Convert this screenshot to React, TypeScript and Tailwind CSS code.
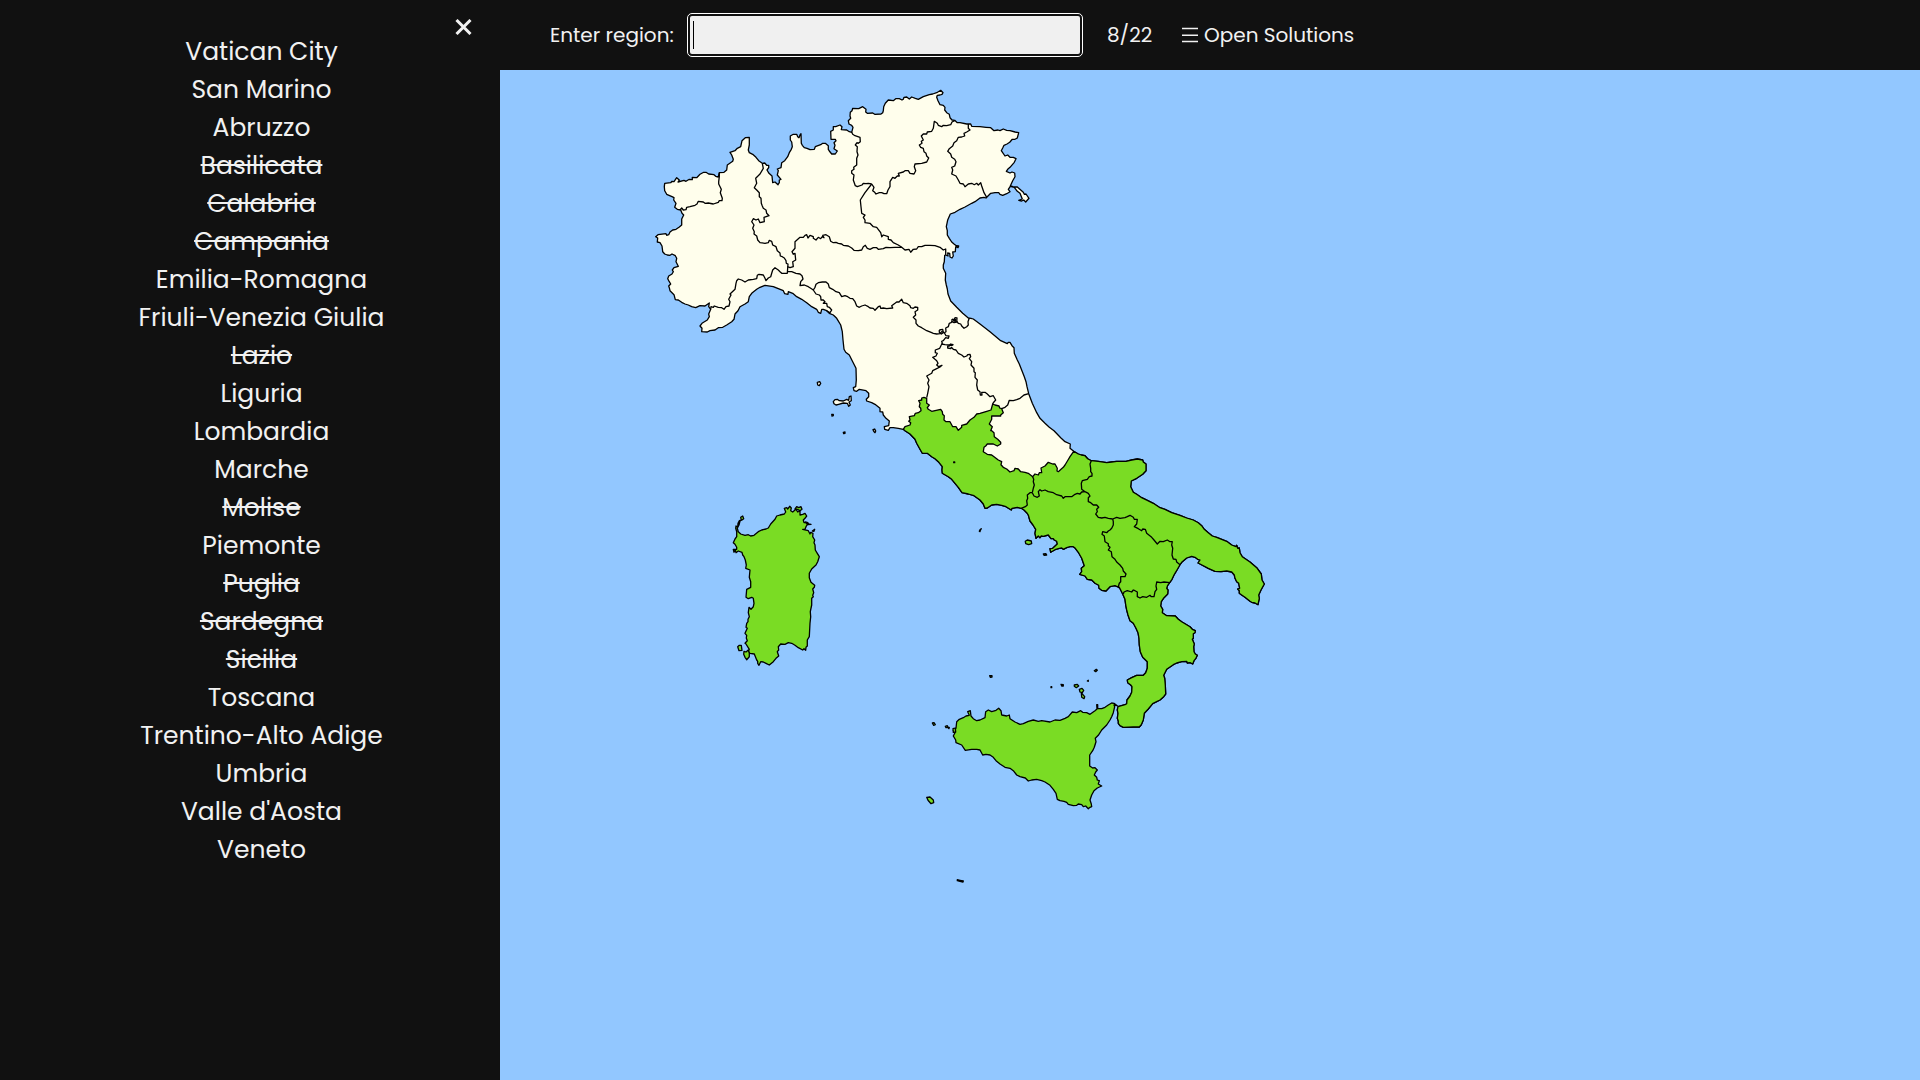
type Pt = [number, number];

const seg = (ox: number, oy: number, s: string): Pt[] =>
  s.trim().split(/\s+/).map((p) => {
    const [x, y] = p.split(",").map(Number);
    return [ox - 500 + x / 3, oy - 70 + y / 3];
  });
const str = (p: Pt[]) => p.map(([x, y]) => `${x.toFixed(1)},${y.toFixed(1)}`).join(" ");

// Local survey sheets; each has its own origin and a 3:1 scale.
const A = (s: string) => seg(650, 120, s);
const B = (s: string) => seg(780, 80, s);
const C = (s: string) => seg(780, 220, s);
const D = (s: string) => seg(900, 310, s);
const E = (s: string) => seg(1000, 440, s);
const F = (s: string) => seg(720, 490, s);
const G = (s: string) => seg(1040, 570, s);
const H = (s: string) => seg(910, 660, s);

const northWestCoast: Pt[] = [
  ...C("370,628 355,625 340,623 330,623 325,631 314,628 313,620 326,617 328,603 318,595 310,585 308,576 300,575 300,565 285,553 275,548 260,543 259,538 266,530 266,520 258,512 238,508 230,514 222,512 220,503 227,500 229,480 228,445 218,425 208,405 197,397 192,388 189,360 187,335 182,315 170,295 160,285 148,280"),
  ...A("530,572 520,568 515,568 512,580 505,577 500,568 485,560 470,548 455,538 440,530 428,520 415,515 414,523 404,521 400,512 385,506 370,500 345,496 330,502 320,508 305,520 298,530 295,545 285,552 270,560 264,572 255,582 252,598 245,605 230,615 218,622 205,623 195,630 180,632 172,636 155,635 156,625 150,618 156,610 172,600 178,590 176,582 182,568"),
  ...A("176,560 178,549 165,558 150,557 137,563 125,560 115,555 105,552 95,547 85,540 76,539 72,524 60,512 58,503 56,498 62,492 58,485 53,476 56,468 66,462 70,455 67,450 72,443 85,439 78,425 80,415 76,407 66,402 60,406 52,405 44,402 38,395 36,378 30,368 22,366 23,354 17,350 24,344 48,341 50,346 56,344 60,336 68,330 78,328 87,322 95,315 95,297 101,285 96,280 92,270 82,268 74,262 78,250 71,240 72,233 66,230 50,223 44,212 43,200 44,190 62,188 66,184 72,185 80,173 88,180 84,186 102,181 108,184 118,178 127,179 127,172 140,173 150,163 161,157 168,157 176,162 192,164 197,169 205,171 208,158 222,157 230,150 232,135 248,124 250,118 245,105 240,97 255,92 262,85 272,80 276,62 286,53 298,52 298,75 295,90 298,98 308,103 318,112 326,122 337,130 344,129 350,136 356,136 356,143 351,150 357,160 366,168 368,188 375,186 384,194 388,188 388,180 393,178 382,165 385,152 382,147 393,143 395,128 404,122 413,110 418,98 424,88 427,80 425,66 421,60 421,48 430,43 440,43 443,50 447,53 450,45 453,41 454,70"),
  ...B("67,196 73,203 81,205 90,209 103,208 106,200 122,194 128,190 136,190 145,197 145,208 148,213 155,222 166,222 172,213 162,206 165,196 162,188 168,182 166,178 153,178 152,154 160,150 160,140 167,140 180,135 186,140 184,149 200,150 208,155 215,157 219,142 215,136 207,132 205,122 212,115 210,108 211,97 216,92 218,85 236,86 248,80 258,88 257,96 262,100 278,99 284,103 303,102 308,98 310,92 311,80 316,70 325,60 340,62 347,56 358,56 366,60 370,58 372,52 380,51 388,57 395,51 406,55 415,58 430,50 448,44 458,42 470,38 482,31 489,38 486,43 480,45 472,46 470,52 474,62 480,74 490,76 495,82 494,90 500,98 508,103 510,113 516,120 524,121"),
];
const northEastCoast: Pt[] = [
  ...B("532,128 540,128 560,132 572,132 575,139 600,140 618,142 632,143 642,152 654,150 660,152 670,147 680,151 690,152 705,156 716,158 712,174 705,178 697,178 689,187 681,192 672,196 668,204 664,212 675,228 683,225 690,232 700,232 708,236 703,247 690,262 683,268 679,274 690,279 696,276 704,279 705,290 698,302 691,318 699,320 712,321 730,337 733,343 738,342 747,355 737,366 731,360 725,363 716,361 727,357 720,340 712,334 703,322 691,319 685,328 690,335 680,341 668,346 660,343 656,338 645,338 632,340 618,354 612,352 600,354 585,365 575,370 555,381 540,388 525,397 511,402 503,420 501,430 499,440 502,452 502,465 508,475 515,486 522,492 529,497 536,498 534,503 527,500 526,515 518,516 520,528 516,534 510,531 509,520 503,519 504,528 497,525"),
  ...C("494,106 493,125 490,135 490,145 497,160 496,180 499,195 502,207 504,222 512,243 530,262 548,280 565,294 573,295 580,297 600,312 630,335 662,362 682,371 685,367 690,367 696,377 702,383 703,400 712,420 718,432 733,470 738,485 741,500 746,521 757,550 770,578 780,595"),
  ...D("435,340 448,352 462,362 482,383 495,395 511,402 510,415 521,424"),
];
const southCoast: Pt[] = [
  ...E("221,34 235,42 244,45 255,47 263,56 274,62 295,64 320,68 335,66 350,64 378,64 395,60 412,57 428,60 430,66 438,72 438,92 428,103 410,115 394,123 392,140 400,157 410,163 425,173 442,181 460,190 480,203 495,208 515,218 540,226 560,234 580,240 595,248 605,257 612,267 625,278 637,288 650,292 680,304 695,315 708,320 710,316 713,325 718,324 720,338 727,350 750,366 770,383 784,402 786,420 793,432 783,450 776,465 778,475 774,494 765,489 755,487 750,484 735,472 724,464 718,460 718,452 713,447 719,445 716,430 710,425 705,415 703,405 695,396 680,393 663,395 645,394 625,385 600,372 594,369 600,360 593,358 585,352 575,349 560,354 545,367 540,374 528,395 522,405 516,418 509,428 503,436 500,445 504,450"),
  ...G("383,72 372,83 364,95 362,108 368,118 367,128 380,137 406,138 415,148 425,155 435,161 450,170 457,178 466,182 465,188 460,191 460,205 457,208 463,222 461,230 462,245 466,252 472,256 467,266 462,272 458,282 450,278 442,279 440,274 425,275 410,279 400,284 380,298 371,316 374,325 376,345 377,372 371,380 360,390 350,395 338,401 325,417 313,430 310,450 304,464 298,471 280,471 250,472 240,467 235,460 235,453 232,445 234,430 232,420 234,410 255,404 260,401 261,390 270,378 275,367 276,350 272,345 263,338 262,330 275,323 290,316 310,316 317,308 322,295 322,275 308,262 301,245 298,225 297,205 294,188 288,175 280,160 270,152 264,135 260,120 257,105 255,88 248,72 238,52"),
  ...E("350,439 345,437 330,440 318,453 305,451 297,445 296,436 285,430 275,420 262,418 255,408 239,403 245,395 244,385 253,377 245,355 235,337 226,325 220,320 210,320 200,323 190,328 185,324 178,325 165,329 152,337 150,326 158,325 172,312 170,304 163,300 160,296 153,296 145,285 130,289 124,288 120,293 115,288 108,295 105,280 107,268 99,255 90,243 85,225 80,218 72,210 64,205"),
  ...D("352,592 336,595 334,600 318,590 305,586 290,583 275,585 262,594 255,595 250,582 240,570 222,557 205,552 186,548 175,532 165,520 155,508 145,500 127,490 126,480 127,470 115,455 105,446 95,440 82,430 67,430 60,418 50,400 45,388 30,372 15,362 10,358"),
];
const lazioBorder: Pt[] = [
  ...C("370,628 375,620 390,615 392,608 386,604 390,600 388,590 403,587 406,580 415,578 423,572 422,565 418,560 420,550 416,542 425,540 425,534 432,532 440,535 440,550 448,555 442,563 445,568 455,574 482,568 487,575 488,583 493,587 492,600 498,605 510,605 518,620 528,620 535,631 545,622 545,616 560,612 570,600 582,592 590,582 600,580 620,574 633,570 638,552 645,555 657,558 659,564 665,566 670,578 662,585 662,588 635,588 635,598 628,612 637,620 632,632"),
  ...D("275,362 282,368 283,380 293,388 302,397 302,402 292,408 280,402 262,402 257,408 252,412 250,425 262,433 275,435 284,442 295,450 305,455 303,464 310,472 320,477 330,486 342,482 345,475 355,477 362,485 375,487 385,490 398,500"),
];
const moliseNorth = D("398,500 405,492 415,495 418,488 425,488 423,474 435,468 445,457 458,462 465,462 472,475 471,483 475,485 483,478 490,472 495,465 504,450 510,440 521,424");

const mainland = [...northWestCoast, ...northEastCoast, ...southCoast];
const south = [...lazioBorder, ...moliseNorth, ...southCoast];

const borders: Pt[][] = [
  A("208,158 208,170 206,185 206,192 214,208 211,218 217,235 216,242 208,242 205,247 190,252 175,249 165,250 160,246 145,244 141,252 135,256 120,260 110,262 108,269 100,270 95,264 90,270"),
  A("337,130 340,145 330,162 317,175 320,190 313,203 320,210 328,218 328,230 333,235 334,250 337,258 340,265 348,270 350,280 357,287 342,292 343,305 330,308 325,297 318,300 310,296 305,305 312,315 308,325 313,335 312,342 320,348 323,360 330,368 345,370 355,368 358,361 365,364 368,375 378,380 382,392 390,399 391,408 397,410 403,414 408,422 409,430 414,432 412,460"),
  A("182,568 183,560 190,562 193,558 205,562 215,563 222,568 228,560 237,558 240,545 236,538 243,525 240,522 255,508 258,490 260,482 265,477 275,480 285,486 295,480 310,478 320,476 322,466 327,463 340,465 345,475 348,482 355,474 362,470 365,460 368,450 375,443 385,450 390,455 395,460 413,460"),
  A("413,455 425,455 438,460 450,462 456,467 459,477 452,485 450,497 463,495 475,500 482,505 490,510"),
  A("490,510 498,522 508,525 512,530 513,540 520,540 525,545 520,550 530,550 532,560 538,562 545,570 540,578 530,572"),
  C("22,140 30,143 40,140 38,125 47,120 45,100 40,103 36,95 45,85 45,65 60,52 70,52 75,46 80,44 84,54 90,46 100,50 100,55 108,60 115,52 122,56 127,50 132,53 128,46 138,44 148,50 152,64 160,68 168,67 175,70 185,72 190,76 205,78 215,84 222,91 235,92 245,90 250,80 256,76 262,85 270,88 280,83 290,83 295,88 310,86 318,82 330,83 345,82 365,82 375,90 387,88 392,97 400,88 410,87 415,80 425,80 435,76 450,76 465,77 480,82 490,90 497,87 497,105"),
  B("365,502 355,495 340,488 333,480 325,478 325,470 310,465 305,470 302,458 290,442 280,440 270,430 255,428 255,420 250,412 255,405 245,400 243,380 241,360 255,338 275,312"),
  B("215,157 218,163 225,167 240,172 241,185 235,190 231,188 226,195 232,200 231,215 234,225 230,235 230,255 221,262 222,268 215,272 215,280 222,285 220,300 226,317 232,320 246,315 250,310 258,311 265,310 275,312"),
  B("275,312 282,322 278,332 284,337 288,342 298,338 305,338 312,341 320,341 324,330 330,320 330,305 338,292 345,295 352,288 358,288 355,280 370,276 375,272 385,272 390,280 402,282 407,272 403,260 405,252 425,250 440,246 446,234 440,228 438,220 432,215 430,205 422,202 418,195 426,190 424,184 430,180 424,168 430,162 440,162 442,156 455,154 460,145 463,124 472,130 475,136 485,140 490,136 500,137 512,134 516,126 524,122"),
  B("565,132 565,145 570,150 560,156 552,160 554,168 545,171 535,172 530,182 522,188 518,198 508,206 503,214 512,222 515,232 524,238 528,245 524,258 515,262 518,270 515,282 528,288 535,300 540,310 550,312 555,320 565,312 575,310 583,314 590,310 595,315 602,308 605,318 612,338 620,352"),
  C("100,210 105,202 108,193 115,188 127,186 138,186 145,192 148,203 158,208 168,215 178,218 185,230 195,227 203,230 210,235 218,236 225,245 230,258 238,262 245,258 255,255 265,260 270,264 280,265 285,271 295,260 300,258 302,265 310,264 320,266 338,264 335,257 345,250 350,246 357,246 365,238 370,248 380,250 390,257 392,263 400,265 405,261 413,262 413,270 405,275 407,285 400,292 408,300 408,310 415,318 425,323 440,332 455,338 460,340 470,342 480,341 485,335 493,338"),
  C("493,338 498,335 497,324 505,320 508,310 513,308 517,304"),
  C("530,303 535,310 542,312 545,318 552,325 560,320 565,315 564,305 568,294"),
  C("516,297 522,299 525,293 531,294 530,306 522,308 516,305 516,297"),
  C("519,300 527,298 526,304 519,302"),
  C("478,330 488,328 490,338 484,342 478,337 478,330"),
  C("493,338 498,347 507,348 505,355 497,353 490,362 485,364 487,370 484,375"),
  C("484,375 479,385 466,390 466,398 472,400 468,408 458,412 465,418 470,422 474,430 470,435 476,440 486,436 480,441 470,446 458,452 455,460 440,468 447,480 443,490 447,500 443,520 440,533"),
  C("484,372 495,374 508,375 512,372 519,374 517,376 512,375 508,378 503,378 503,384 512,386 514,382 520,388 528,390 535,400 545,405 552,411 560,408 563,404 570,403 572,410 568,416 575,425 573,435 582,445 582,455 586,458 585,472 592,480 590,495 593,510 600,515 601,525 606,525 605,517 615,517 622,522 630,530 640,527 647,540 640,548 638,552"),
  C("665,566 675,562 683,555 688,541 700,542 710,539 720,535 732,525 746,521"),
  D("398,500 401,508 400,515 403,525 400,535 397,548"),
  D("397,548 390,548 382,555 383,565 380,572 382,585 376,590 364,595"),
  E("97,158 102,168 112,172 118,168 115,155 120,149 125,153 135,150 145,155 160,158 170,164 185,168 190,175 195,170 215,170 225,163 232,160 240,162 245,156 255,155"),
  E("274,62 270,72 272,85 272,95 276,100 276,108 268,110 262,118 247,122 244,130 245,148 255,155"),
  E("255,155 265,160 270,168 265,173 265,185 272,188 280,195 290,195 296,202 290,208 292,215 287,222 295,232 305,234 315,232 325,235 338,237"),
  E("338,237 340,245 340,255 335,265 330,270 325,273 320,278 308,275 306,283 313,288 315,305 325,311 325,317 330,322 325,330 334,335 336,350 345,358 350,366 360,375 368,385 370,393 378,402 375,410 362,410 362,425 358,430 355,440 358,444"),
  E("338,237 350,232 360,235 375,233 382,230 390,226 400,232 403,238 412,238 410,252 403,260 415,266 425,272 428,267 436,268 440,280 455,292 462,300 472,312 480,304 490,305 502,300 510,305 517,305 515,315 518,325 516,345 520,357 528,358 530,366 540,374"),
  G("250,72 252,66 262,62 275,66 280,60 285,62 292,66 292,80 300,84 308,80 320,82 330,76 334,80 342,80 345,65 350,58 348,48 350,36 362,38 372,36 389,38"),
];

const sardinia = F("50,125 47,115 48,108 53,112 54,100 58,92 64,90 62,82 68,78 71,86 66,90 60,93 57,105 52,115 55,125 62,132 75,136 85,134 92,138 102,136 115,125 125,120 138,117 145,114 152,102 165,88 170,78 180,75 193,72 197,66 193,55 200,53 203,57 209,49 214,54 212,62 218,66 225,60 227,57 233,66 240,63 240,75 248,73 255,70 260,78 255,85 250,90 252,98 263,98 262,104 258,110 255,118 248,118 265,122 270,132 272,127 279,130 278,140 284,150 282,158 285,165 286,180 292,190 298,200 293,215 288,225 275,237 268,250 268,263 273,277 284,286 283,292 278,297 281,308 278,316 280,320 275,325 275,345 271,365 272,380 270,400 268,440 262,450 262,468 258,472 257,481 252,476 248,480 235,473 225,466 215,460 205,458 195,463 182,462 175,470 176,480 172,485 176,498 168,505 160,515 148,525 138,520 130,516 122,515 117,526 113,520 113,514 110,510 103,492 90,490 85,484 88,478 78,462 75,460 82,452 79,444 80,436 75,430 82,415 78,412 80,400 84,395 84,388 88,380 85,368 87,352 93,358 100,350 102,340 100,325 95,322 85,326 78,322 80,298 92,292 92,275 88,262 90,240 77,235 79,225 76,210 72,200 68,195 66,187 55,183 48,188 46,180 42,187 40,178 50,178 50,172 45,163 40,158 45,147 50,140");
const sicily = H("612,135 614,140 610,158 605,170 600,180 590,195 575,210 565,226 556,235 558,245 553,262 548,272 539,285 539,318 548,324 555,323 562,330 557,336 553,345 560,352 562,360 568,362 565,372 575,378 562,384 552,392 545,405 540,420 544,432 545,440 540,442 535,446 527,438 520,440 515,434 505,432 500,436 490,437 475,433 470,427 462,424 450,422 442,418 438,400 430,388 420,376 405,366 395,362 380,358 365,360 355,363 346,354 330,350 320,345 310,332 300,325 285,322 270,312 258,302 250,292 240,285 228,283 218,285 210,270 200,268 185,268 166,271 155,255 138,248 137,240 130,228 135,218 130,212 138,205 140,185 148,178 160,173 168,168 178,166 173,155 181,152 183,168 190,176 200,182 210,180 225,173 227,155 235,150 245,155 258,151 266,145 273,152 275,165 290,168 298,165 300,176 315,186 330,193 340,191 355,184 370,180 385,184 395,182 420,186 435,180 450,181 465,175 475,170 487,156 500,158 512,152 518,157 530,158 540,163 555,152 561,147 560,134 563,134 563,146 575,146 585,142 595,135 605,129 612,130 622,137");

const greenIslets: Pt[][] = [
  F("53,470 58,466 64,466 66,481 57,482"),
  F("72,484 78,486 85,480 88,490 88,500 80,509 75,502 71,493"),
  F("225,57 230,50 236,53 243,50 246,58 240,62 232,58"),
  F("256,96 262,97 266,102 273,103 264,104"),
  F("277,123 284,118 282,124"),
  E("76,304 82,300 94,303 95,311 86,314 77,311"),
  E("130,342 138,341 140,345 132,346"),
  E("-62,274 -60,269 -56,266 -59,271 -60,275"),
  G("33,350 35,350 35,353 33,353"),
  G("63,343 70,344 70,348 65,348"),
  G("103,345 112,343 116,348 109,353 103,349"),
  G("118,358 126,355 131,361 127,368 120,366"),
  G("124,369 128,373 134,380 132,386 125,382"),
  G("142,333 145,331 145,334"),
  G("163,302 169,298 172,301 167,305"),
  H("239,47 246,47 246,51 241,52"),
  H("67,189 72,188 76,194 71,196"),
  H("106,199 112,197 114,202 108,203"),
  H("113,202 118,202 117,206"),
  H("50,412 60,411 70,420 71,428 63,431 54,421"),
  H("142,659 150,661 160,663 159,666 150,664 142,662"),
  H("129,206 136,204 137,216 130,217"),
  D("161,456 164,456 164,458 161,458"),
];
const creamIslets: Pt[][] = [
  C("112,487 119,485 122,490 118,497 113,495"),
  C("160,545 165,539 172,538 178,542 190,543 200,538 206,541 208,530 213,528 214,542 207,546 211,555 206,559 202,550 190,549 176,553 168,555 162,551"),
  C("155,583 160,583 160,587 156,588"),
  C("190,637 195,636 195,640 191,641"),
  C("279,629 284,627 287,633 285,638 281,634"),
];

const items: [string, boolean][] = [
  ["Vatican City", false],
  ["San Marino", false],
  ["Abruzzo", false],
  ["Basilicata", true],
  ["Calabria", true],
  ["Campania", true],
  ["Emilia-Romagna", false],
  ["Friuli-Venezia Giulia", false],
  ["Lazio", true],
  ["Liguria", false],
  ["Lombardia", false],
  ["Marche", false],
  ["Molise", true],
  ["Piemonte", false],
  ["Puglia", true],
  ["Sardegna", true],
  ["Sicilia", true],
  ["Toscana", false],
  ["Trentino-Alto Adige", false],
  ["Umbria", false],
  ["Valle d'Aosta", false],
  ["Veneto", false],
];

function ItalyMap() {
  return (
    <svg className="block h-[1010px] w-[1420px]" viewBox="0 0 1420 1010" fill="none" stroke="#000" strokeWidth="1.3" strokeLinejoin="round">
      <polygon points={str(mainland)} fill="#fffeec" />
      <polygon points={str(south)} fill="#7adc24" />
      {borders.map((b, i) => (
        <polyline key={i} points={str(b)} />
      ))}
      <polygon points={str(sardinia)} fill="#7adc24" />
      <polygon points={str(sicily)} fill="#7adc24" />
      {greenIslets.map((p, i) => (
        <polygon key={i} points={str(p)} fill="#7adc24" />
      ))}
      {creamIslets.map((p, i) => (
        <polygon key={i} points={str(p)} fill="#fffeec" />
      ))}
    </svg>
  );
}

export default function App() {
  return (
    <div className="flex h-screen w-full overflow-hidden bg-[#111] font-['Poppins','Inter',sans-serif] text-[#f1f1f1]">
      <aside className="relative w-[500px] shrink-0 pt-[33px]">
        <button className="absolute top-[19px] left-[455px]" aria-label="Close">
          <svg width="17" height="16" viewBox="0 0 17 16" stroke="#f1f1f1" strokeWidth="3" fill="none">
            <path d="M1.5 1 L15.5 15 M15.5 1 L1.5 15" />
          </svg>
        </button>
        <ul className="w-[523px] text-center text-[25px] leading-[38px]">
          {items.map(([name, done]) => (
            <li key={name}>
              <span className={done ? "line-through decoration-2" : ""}>{name}</span>
            </li>
          ))}
        </ul>
      </aside>
      <main className="flex min-w-0 flex-1 flex-col">
        <header className="flex h-[70px] shrink-0 items-center pl-[50px] text-xl">
          <label className="w-[140px] whitespace-nowrap">Enter region:</label>
          <div className="flex h-[38px] w-[390px] items-center rounded-[2px] bg-[#f0f0f0] pl-[3px] outline outline-offset-2 outline-white">
            <span className="h-7 w-px bg-black" />
          </div>
          <span className="ml-[27px] w-[75px]">8/22</span>
          <button className="flex items-center gap-[6px] whitespace-nowrap">
            <svg width="16" height="16" viewBox="0 0 16 16" stroke="#f1f1f1" strokeWidth="1.4">
              <path d="M0 1.5H16 M0 8.2H16 M0 14.5H16" />
            </svg>
            Open Solutions
          </button>
        </header>
        <div className="flex-1 bg-[#92c7ff]">
          <ItalyMap />
        </div>
      </main>
    </div>
  );
}
